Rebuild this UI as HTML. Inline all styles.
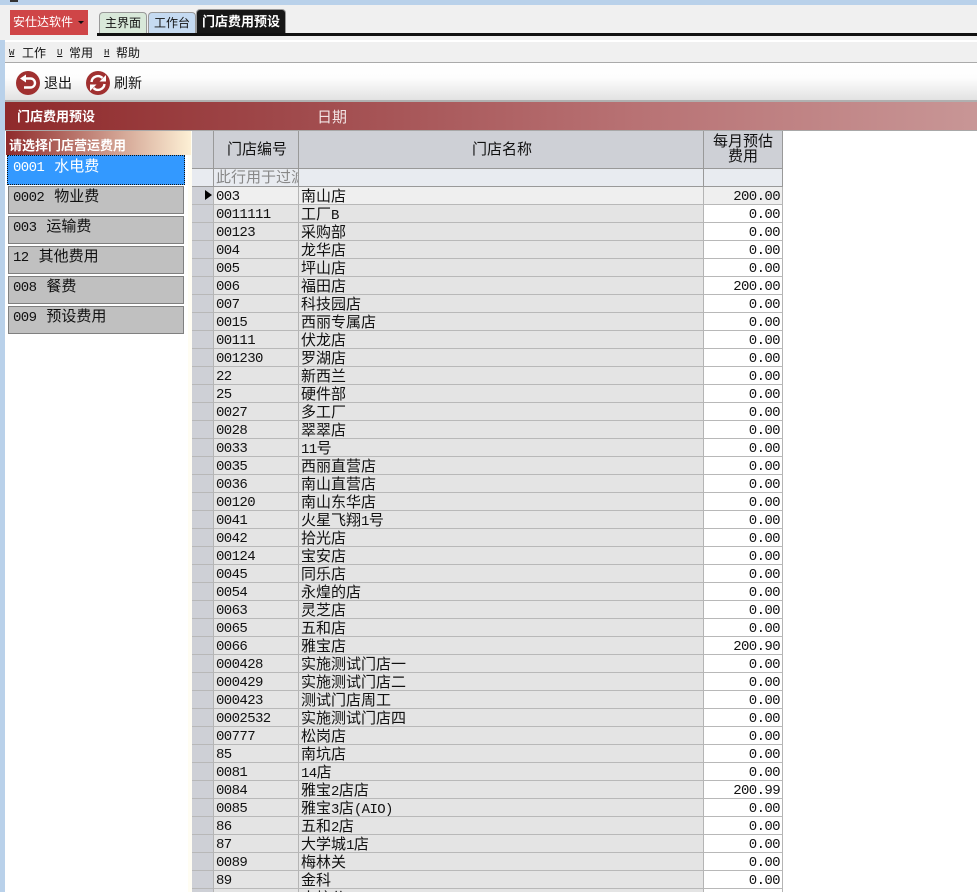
<!DOCTYPE html>
<html lang="zh"><head><meta charset="utf-8"><title>门店费用预设</title>
<style>
*{box-sizing:border-box}
html,body{margin:0;padding:0;width:977px;height:892px;overflow:hidden;background:#fff}
body{position:relative;font-family:"Liberation Sans","Noto Sans CJK SC",sans-serif;color:#111;font-size:15px}
.a{position:absolute;white-space:nowrap}
i{font:normal 14px "Liberation Mono",monospace;letter-spacing:-.6px}
.u{font:normal 9px "Liberation Mono",monospace;text-decoration:underline}
.item{position:absolute;left:8px;width:176px;height:28px;background:#c0c0c0;border:1px solid #808080;padding-left:4px;font-size:15px;line-height:19px;color:#111}
.item i{margin-right:10px}
#g{position:absolute;left:192px;top:131px;width:591px;height:761px;overflow:hidden}
.r{display:flex;height:18px;line-height:19px;font-size:15px}
.r div{border-right:1px solid #b4b4b4;border-bottom:1px solid #b8b8b8;background:#e4e4e4;padding-left:3px;overflow:hidden;white-space:nowrap}
.r .h{width:22px;background:#ced0d6;padding:0}
.r .c{width:85px;padding-left:2px;font:normal 14px/21px "Liberation Mono",monospace;letter-spacing:-.6px}
.r .n{width:405px;padding-left:2px}
.r .m{width:79px;background:#fff;text-align:right;padding:0 2px 0 0;font:normal 14px/21px "Liberation Mono",monospace;letter-spacing:-.6px}
.hd div{background:#ced0d6;border-right:1px solid #999;border-bottom:1px solid #999;text-align:center;padding:0}
</style></head><body>
<div class="a" style="left:0;top:0;width:977px;height:5px;background:#b9d1ea"></div>
<div class="a" style="left:10px;top:0;width:8px;height:2px;background:#333"></div>
<div class="a" style="left:0;top:5px;width:977px;height:35px;background:#f0f0f0"></div>
<div class="a" style="left:0;top:40px;width:5px;height:852px;background:#b9d1ea"></div>
<div class="a" style="left:10px;top:10px;width:78px;height:25px;background:#cf4547;color:#fff;font-size:12px;line-height:25px;padding-left:3px">安仕达软件<span style="display:inline-block;margin-left:5px;border:3px solid transparent;border-top:3px solid #111;border-bottom:0;vertical-align:2px"></span></div>
<div class="a" style="left:99px;top:12px;width:48px;height:22px;background:#d8e8d9;border:1px solid #999;border-bottom:0;border-radius:4px 4px 0 0;text-align:center;font-size:12px;line-height:20px">主界面</div>
<div class="a" style="left:148px;top:12px;width:48px;height:22px;background:#c5daf1;border:1px solid #999;border-bottom:0;border-radius:4px 4px 0 0;text-align:center;font-size:12px;line-height:20px">工作台</div>
<div class="a" style="left:196px;top:9px;width:90px;height:25px;background:#171717;border:1px solid #999;border-bottom:0;border-radius:4px 4px 0 0;text-align:center;font-size:13px;line-height:23px;color:#fff;font-weight:bold">门店费用预设</div>
<div class="a" style="left:97px;top:33px;width:880px;height:3px;background:#111"></div>

<div class="a" style="left:5px;top:40px;width:972px;height:2px;background:#fff"></div>
<div class="a" style="left:5px;top:42px;width:972px;height:20px;background:#f0f0f0"></div>
<div class="a u" style="left:9px;top:46px;line-height:15px">W</div>
<div class="a" style="left:22px;top:46px;font-size:12px;line-height:15px">工作</div>
<div class="a u" style="left:57px;top:46px;line-height:15px">U</div>
<div class="a" style="left:69px;top:46px;font-size:12px;line-height:15px">常用</div>
<div class="a u" style="left:104px;top:46px;line-height:15px">H</div>
<div class="a" style="left:116px;top:46px;font-size:12px;line-height:15px">帮助</div>
<div class="a" style="left:5px;top:62px;width:972px;height:1px;background:#aaa"></div>
<div class="a" style="left:5px;top:63px;width:972px;height:37px;background:linear-gradient(#fff,#fdfdfd 40%,#e2e2e2)"></div>
<div class="a" style="left:5px;top:100px;width:972px;height:2px;background:#b0b0b0"></div>

<svg class="a" style="left:16px;top:71px" width="24" height="24" viewBox="0 0 24 24"><circle cx="12" cy="12" r="12" fill="#a03030"/><path d="M9 7.500h5.500a4.500 4.500 0 0 1 0 9H8" fill="none" stroke="#fff" stroke-width="2.400"/><path d="M4 7.500 10 3.500v8z" fill="#fff"/></svg>
<div class="a" style="left:44px;top:74px;font-size:14px;line-height:18px">退出</div>
<svg class="a" style="left:86px;top:71px" width="24" height="24" viewBox="0 0 24 24"><circle cx="12" cy="12" r="12" fill="#a03030"/><path d="M5.500 11a6.500 6.500 0 0 1 11-4" fill="none" stroke="#fff" stroke-width="2.400"/><path d="M13.500 10.500h6.500v-6.500z" fill="#fff"/><path d="M18.500 13a6.500 6.500 0 0 1-11 4" fill="none" stroke="#fff" stroke-width="2.400"/><path d="M10.500 13.500H4v6.500z" fill="#fff"/></svg>
<div class="a" style="left:114px;top:74px;font-size:14px;line-height:18px">刷新</div>

<div class="a" style="left:5px;top:102px;width:972px;height:28px;background:linear-gradient(90deg,#8f2a2b,#a04a4c 30%,#b87274 65%,#c89696)"></div>
<div class="a" style="left:17px;top:108px;color:#fff;font-weight:bold;font-size:13px;line-height:17px">门店费用预设</div>
<div class="a" style="left:317px;top:109px;color:#f2e4e4;font-size:15px;line-height:18px">日期</div>
<div class="a" style="left:5px;top:130px;width:972px;height:1px;background:#a8a8a8"></div>

<div class="a" style="left:188px;top:131px;width:4px;height:761px;background:#fffdf3"></div>
<div class="a" style="left:6px;top:131px;width:185px;height:24px;background:linear-gradient(90deg,#8f2a2b,#fdf0d5);color:#fff;font-weight:bold;font-size:13px;line-height:30px;padding-left:3px;overflow:hidden">请选择门店营运费用</div>
<div class="item" style="left:7px;width:178px;top:155px;height:30px;padding-left:5px;padding-top:1px;background:#3399ff;color:#fff;border:1px dotted #111"><i>0001</i>水电费</div>
<div class="item" style="top:186px"><i>0002</i>物业费</div>
<div class="item" style="top:216px"><i>003</i>运输费</div>
<div class="item" style="top:246px"><i>12</i>其他费用</div>
<div class="item" style="top:276px"><i>008</i>餐费</div>
<div class="item" style="top:306px"><i>009</i>预设费用</div>

<div id="g">
<div class="r hd" style="height:38px"><div class="h"></div><div class="c" style="font:15px/38px 'Liberation Sans','Noto Sans CJK SC',sans-serif;letter-spacing:0">门店编号</div><div class="n" style="line-height:38px">门店名称</div><div class="m" style="background:#ced0d6;text-align:center;font:15px/15px 'Liberation Sans','Noto Sans CJK SC',sans-serif;letter-spacing:0;padding:3px 0 0;border-right:1px solid #999">每月预估<br>费用</div></div>
<div class="r"><div class="h" style="background:#e8ebf0;border-color:#999"></div><div class="c" style="background:#e8ebf0;color:#888;border-color:#999;font:15px/18px 'Liberation Sans','Noto Sans CJK SC',sans-serif;letter-spacing:0">此行用于过滤</div><div class="n" style="background:#e8ebf0;border-color:#999"></div><div class="m" style="background:#e8ebf0;border-color:#999"></div></div>
<div class="r"><div class="h" style="position:relative"><span style="position:absolute;left:13px;top:3px;border:5px solid transparent;border-left:7px solid #000;border-right:0"></span></div><div class="c" style="background:#efefef">003</div><div class="n" style="background:#efefef">南山店</div><div class="m" style="background:#efefef">200.00</div></div>
<div class="r"><div class="h"></div><div class="c">0011111</div><div class="n">工厂<i>B</i></div><div class="m">0.00</div></div>
<div class="r"><div class="h"></div><div class="c">00123</div><div class="n">采购部</div><div class="m">0.00</div></div>
<div class="r"><div class="h"></div><div class="c">004</div><div class="n">龙华店</div><div class="m">0.00</div></div>
<div class="r"><div class="h"></div><div class="c">005</div><div class="n">坪山店</div><div class="m">0.00</div></div>
<div class="r"><div class="h"></div><div class="c">006</div><div class="n">福田店</div><div class="m">200.00</div></div>
<div class="r"><div class="h"></div><div class="c">007</div><div class="n">科技园店</div><div class="m">0.00</div></div>
<div class="r"><div class="h"></div><div class="c">0015</div><div class="n">西丽专属店</div><div class="m">0.00</div></div>
<div class="r"><div class="h"></div><div class="c">00111</div><div class="n">伏龙店</div><div class="m">0.00</div></div>
<div class="r"><div class="h"></div><div class="c">001230</div><div class="n">罗湖店</div><div class="m">0.00</div></div>
<div class="r"><div class="h"></div><div class="c">22</div><div class="n">新西兰</div><div class="m">0.00</div></div>
<div class="r"><div class="h"></div><div class="c">25</div><div class="n">硬件部</div><div class="m">0.00</div></div>
<div class="r"><div class="h"></div><div class="c">0027</div><div class="n">多工厂</div><div class="m">0.00</div></div>
<div class="r"><div class="h"></div><div class="c">0028</div><div class="n">翠翠店</div><div class="m">0.00</div></div>
<div class="r"><div class="h"></div><div class="c">0033</div><div class="n"><i>11</i>号</div><div class="m">0.00</div></div>
<div class="r"><div class="h"></div><div class="c">0035</div><div class="n">西丽直营店</div><div class="m">0.00</div></div>
<div class="r"><div class="h"></div><div class="c">0036</div><div class="n">南山直营店</div><div class="m">0.00</div></div>
<div class="r"><div class="h"></div><div class="c">00120</div><div class="n">南山东华店</div><div class="m">0.00</div></div>
<div class="r"><div class="h"></div><div class="c">0041</div><div class="n">火星飞翔<i>1</i>号</div><div class="m">0.00</div></div>
<div class="r"><div class="h"></div><div class="c">0042</div><div class="n">拾光店</div><div class="m">0.00</div></div>
<div class="r"><div class="h"></div><div class="c">00124</div><div class="n">宝安店</div><div class="m">0.00</div></div>
<div class="r"><div class="h"></div><div class="c">0045</div><div class="n">同乐店</div><div class="m">0.00</div></div>
<div class="r"><div class="h"></div><div class="c">0054</div><div class="n">永煌的店</div><div class="m">0.00</div></div>
<div class="r"><div class="h"></div><div class="c">0063</div><div class="n">灵芝店</div><div class="m">0.00</div></div>
<div class="r"><div class="h"></div><div class="c">0065</div><div class="n">五和店</div><div class="m">0.00</div></div>
<div class="r"><div class="h"></div><div class="c">0066</div><div class="n">雅宝店</div><div class="m">200.90</div></div>
<div class="r"><div class="h"></div><div class="c">000428</div><div class="n">实施测试门店一</div><div class="m">0.00</div></div>
<div class="r"><div class="h"></div><div class="c">000429</div><div class="n">实施测试门店二</div><div class="m">0.00</div></div>
<div class="r"><div class="h"></div><div class="c">000423</div><div class="n">测试门店周工</div><div class="m">0.00</div></div>
<div class="r"><div class="h"></div><div class="c">0002532</div><div class="n">实施测试门店四</div><div class="m">0.00</div></div>
<div class="r"><div class="h"></div><div class="c">00777</div><div class="n">松岗店</div><div class="m">0.00</div></div>
<div class="r"><div class="h"></div><div class="c">85</div><div class="n">南坑店</div><div class="m">0.00</div></div>
<div class="r"><div class="h"></div><div class="c">0081</div><div class="n"><i>14</i>店</div><div class="m">0.00</div></div>
<div class="r"><div class="h"></div><div class="c">0084</div><div class="n">雅宝<i>2</i>店店</div><div class="m">200.99</div></div>
<div class="r"><div class="h"></div><div class="c">0085</div><div class="n">雅宝<i>3</i>店<i>(AIO)</i></div><div class="m">0.00</div></div>
<div class="r"><div class="h"></div><div class="c">86</div><div class="n">五和<i>2</i>店</div><div class="m">0.00</div></div>
<div class="r"><div class="h"></div><div class="c">87</div><div class="n">大学城<i>1</i>店</div><div class="m">0.00</div></div>
<div class="r"><div class="h"></div><div class="c">0089</div><div class="n">梅林关</div><div class="m">0.00</div></div>
<div class="r"><div class="h"></div><div class="c">89</div><div class="n">金科</div><div class="m">0.00</div></div>
<div class="r"><div class="h"></div><div class="c"></div><div class="n">大校分</div><div class="m"></div></div>
</div>
</body></html>
